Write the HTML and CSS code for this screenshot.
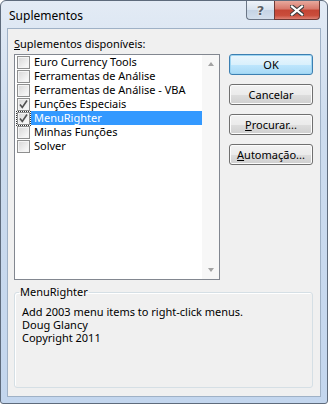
FILE: index.html
```html
<!DOCTYPE html>
<html lang="pt">
<head>
  <meta charset="UTF-8">
  <title>Suplementos</title>
  <link rel="stylesheet" href="styles.css">
</head>
<body>
  <div class="window">
    <div class="titlebar">
      <span class="title">Suplementos</span>
      <div class="caption-buttons">
        <span class="cap-btn help">?</span>
        <span class="cap-btn close">
          <svg width="14" height="11" viewBox="0 0 14 11">
            <path d="M2 1.5 L12 9.5 M12 1.5 L2 9.5" stroke="#3b3b3b" stroke-width="4.2" stroke-linecap="square" fill="none"/>
            <path d="M2 1.5 L12 9.5 M12 1.5 L2 9.5" stroke="#fff" stroke-width="2.2" stroke-linecap="square" fill="none"/>
          </svg>
        </span>
      </div>
    </div>

    <div class="client">
      <div class="main">
        <div class="list-col">
          <div class="label"><u>S</u>uplementos disponíveis:</div>
          <div class="listbox">
            <ul class="items">
              <li><span class="check"></span><span class="name">Euro Currency Tools</span></li>
              <li><span class="check"></span><span class="name">Ferramentas de Análise</span></li>
              <li><span class="check"></span><span class="name">Ferramentas de Análise - VBA</span></li>
              <li><span class="check checked"></span><span class="name">Funções Especiais</span></li>
              <li class="selected"><span class="check checked"></span><span class="name">MenuRighter</span></li>
              <li><span class="check"></span><span class="name">Minhas Funções</span></li>
              <li><span class="check"></span><span class="name">Solver</span></li>
            </ul>
            <div class="scrollbar">
              <span class="arrow up"></span>
              <span class="arrow down"></span>
            </div>
          </div>
        </div>
        <div class="buttons">
          <button class="btn default">OK</button>
          <button class="btn">Cancelar</button>
          <button class="btn"><u>P</u>rocurar...</button>
          <button class="btn"><u>A</u>utomação...</button>
        </div>
      </div>

      <fieldset class="details">
        <legend>MenuRighter</legend>
        <p>Add 2003 menu items to right-click menus.<br>Doug Glancy<br>Copyright 2011</p>
      </fieldset>
    </div>
  </div>
</body>
</html>
```

FILE: styles.css
```css
body {
  margin: 0;
  font-family: 'Noto Sans', 'Open Sans', sans-serif;
  font-size: 11px;
  color: #000;
  background: #fff;
}
.window {
  box-sizing: border-box;
  width: 328px;
  height: 404px;
  display: flex;
  flex-direction: column;
  padding: 0 6px 6px 6px;
  border: 1px solid #5e6b7c;
  border-radius: 6px 6px 3px 3px;
  background: linear-gradient(#e3ebf5, #cddcee 30%, #c3d6ee);
}
.titlebar {
  height: 27px;
  display: flex;
  justify-content: space-between;
  align-items: flex-start;
}
.title {
  padding: 6px 0 0 2px;
  font-size: 12px;
  color: #000;
}
.caption-buttons {
  display: flex;
  margin-right: 1px;
}
.cap-btn {
  box-sizing: border-box;
  height: 19px;
  display: flex;
  align-items: center;
  justify-content: center;
  border: 1px solid #6b7686;
  border-top: none;
}
.help {
  width: 28px;
  border-right: none;
  border-radius: 0 0 0 4px;
  background: linear-gradient(#eef3f9, #d8e2ee 50%, #c5d3e4 51%, #d3dfec);
  font-family: 'DejaVu Sans', sans-serif;
  font-weight: bold;
  font-size: 13px;
  color: #5a5f66;
  text-shadow: 0 0 1px #fff, 0 0 2px #fff;
}
.close {
  width: 46px;
  border-radius: 0 0 4px 0;
  border-color: #6e3a35;
  background: linear-gradient(#e8a99d, #d7776a 45%, #c44534 50%, #c94d3b 80%, #dd8173);
}
.client {
  flex: 1;
  display: flex;
  flex-direction: column;
  padding: 8px 7px 8px 6px;
  border: 1px solid #9fb1c6;
  background: #f0f0f0;
}
.main {
  display: flex;
  gap: 9px;
}
.label {
  height: 14px;
  line-height: 14px;
  margin-bottom: 3px;
}
.listbox {
  box-sizing: border-box;
  width: 206px;
  height: 226px;
  display: flex;
  border: 1px solid #828790;
  background: #fff;
}
.items {
  flex: 1;
  list-style: none;
  margin: 0;
  padding: 0 0 0 2px;
}
.items li {
  height: 14px;
  display: flex;
  align-items: center;
}
.check {
  box-sizing: border-box;
  width: 13px;
  height: 13px;
  margin-right: 1px;
  border: 1px solid #8e8f8f;
  background: linear-gradient(135deg, #d6d6d6, #f6f6f6 80%);
  box-shadow: inset 0 0 0 1px #f4f4f4;
}
.check.checked {
  background-image: url("data:image/svg+xml,%3Csvg xmlns='http://www.w3.org/2000/svg' width='11' height='11'%3E%3Cpath d='M2 5.5 L4.3 8.5 L9 1.5' stroke='%23505050' stroke-width='1.6' fill='none'/%3E%3C/svg%3E"), linear-gradient(135deg, #d6d6d6, #f6f6f6 80%);
}
.name {
  flex: 1;
  height: 14px;
  line-height: 14px;
  padding-left: 3px;
  white-space: nowrap;
}
.selected .name {
  background: #3399ff;
  color: #fff;
}
.selected .check {
  outline: 1px dotted #333;
  outline-offset: 0;
}
.scrollbar {
  width: 17px;
  display: flex;
  flex-direction: column;
  justify-content: space-between;
  align-items: center;
  padding: 7px 0;
  background: #f7f7f7;
}
.arrow {
  width: 0;
  height: 0;
  border-left: 3.5px solid transparent;
  border-right: 3.5px solid transparent;
}
.arrow.up {
  border-bottom: 4px solid #a3a3a3;
}
.arrow.down {
  border-top: 4px solid #a3a3a3;
}
.buttons {
  display: flex;
  flex-direction: column;
  gap: 9px;
  padding-top: 17px;
}
.btn {
  box-sizing: border-box;
  width: 84px;
  height: 21px;
  padding: 0;
  font: inherit;
  color: #000;
  border: 1px solid #707070;
  border-radius: 3px;
  background: linear-gradient(#f2f2f2, #ebebeb 50%, #dddddd 51%, #cfcfcf);
  box-shadow: inset 0 0 0 1px #fcfcfc;
}
.btn.default {
  border-color: #3c7fb1;
  box-shadow: inset 0 0 0 1px #9fd6f3;
  background: linear-gradient(#eaf6fd, #d9f0fc 50%, #bee6fd 51%, #a7d9f5);
}
.details {
  flex: 1;
  margin: 5px 0 0 0;
  padding: 0 4px;
  border: 1px solid #d5dfe5;
  border-radius: 3px;
  box-shadow: inset 1px 1px 0 #fff;
}
.details legend {
  padding: 0 1px;
  font-size: 11px;
  line-height: 14px;
}
.details p {
  margin: 6px 0 0 0;
  padding-left: 3px;
  line-height: 13px;
}
```
